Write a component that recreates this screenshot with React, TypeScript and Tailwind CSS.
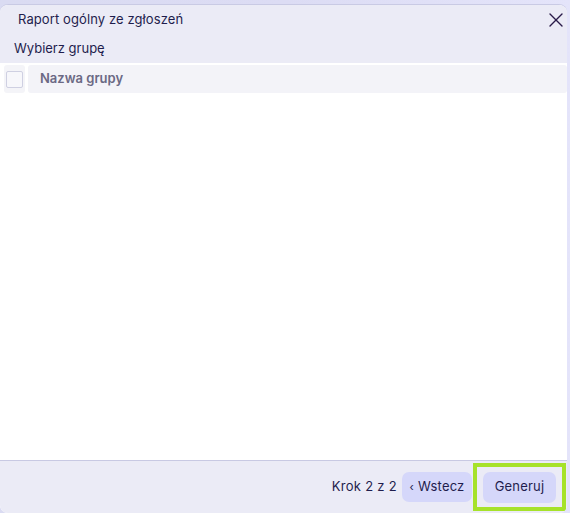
import { X } from "lucide-react"

export default function App() {
  return (
    <div
      className="h-[513px] w-[570px] overflow-hidden bg-gradient-to-r from-[#dadbf2] via-[#dcdcf4] to-[#e4e4fa] pt-[4px]"
      style={{ fontFamily: "Inter, 'Noto Sans', sans-serif" }}
    >
      <div className="flex h-[509px] w-[567px] flex-col overflow-hidden rounded-t-[8px] rounded-b-[8px] border-t border-[#c9cae4] bg-white">
        {/* header */}
        <div className="bg-[#ebebf6]">
          <div className="flex h-[30px] items-center justify-between pl-[18px]">
            <span className="text-[13px] tracking-[0.1px] text-[#1f1d4d]">Raport ogólny ze zgłoszeń</span>
            <X className="-mr-[1px] h-[24px] w-[24px] text-[#2a1b4a]" strokeWidth={1.4} />
          </div>
          <div className="flex h-[28px] items-center pl-[14px] text-[13px] text-[#1f1d4d]">Wybierz grupę</div>
        </div>

        {/* table */}
        <div className="flex-1 bg-white pt-[2px]">
          <div className="flex h-[28px] gap-[3px] pl-[4px]">
            <div className="flex w-[21px] items-center justify-center rounded-[3px] bg-[#f4f4f8]">
              <div className="h-[17px] w-[17px] rounded-[2px] border border-[#cfd0e2] bg-[#f7f7fb]" />
            </div>
            <div className="flex flex-1 items-center rounded-[3px] bg-[#f3f3f8] pl-[12px] text-[13px] font-semibold text-[#6b6984]">
              Nazwa grupy
            </div>
          </div>
        </div>

        {/* footer */}
        <div className="flex h-[53px] items-center justify-end border-t border-[#c8c9e3] bg-[#ebebf6] pr-[1px]">
          <span className="mr-[5px] text-[13px] tracking-[0.3px] text-[#1f1d4d]">Krok 2 z 2</span>
          <button className="flex h-[30px] w-[70px] items-center justify-center rounded-[7px] bg-[#d5d7fa] text-[13px] tracking-[0.2px] text-[#1f1d4d]">
            <span className="mr-[4px] text-[11px]">‹</span>Wstecz
          </button>
          <div className="ml-[1px] flex h-[48px] w-[93px] items-center justify-center border-[4px] border-[#a6e22a]">
            <button className="flex h-[31px] w-[73px] items-center justify-center rounded-[7px] bg-[#d5d7fa] text-[13px] tracking-[0.2px] text-[#1f1d4d]">
              Generuj
            </button>
          </div>
        </div>
      </div>
    </div>
  )
}
